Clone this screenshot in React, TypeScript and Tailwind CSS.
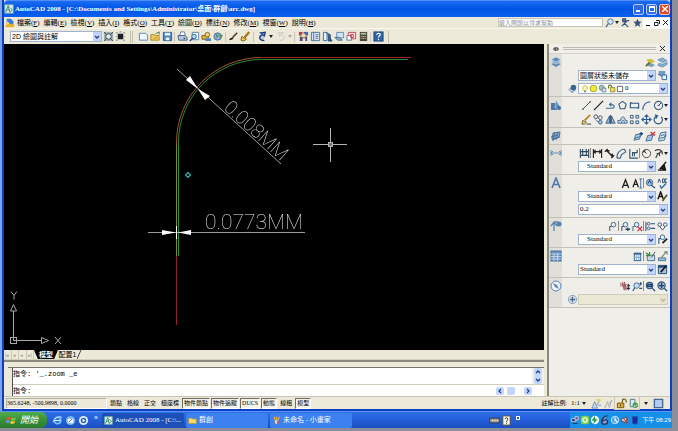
import type { ReactNode } from "react";
import clsx from "clsx";

type IconName = keyof typeof icons;

// All toolbar glyphs are drawn on a 12x12 grid
const icons = {
  app: (
    <>
      <rect x="1" y="1" width="10" height="10" fill="#dff0e8" stroke="#7fb5a5" />
      <path d="M2 10 5 2l2 8M3 7h4M7 4l3 3-3 3" stroke="#1f7a6c" fill="none" />
    </>
  ),
  doc: (
    <>
      <path d="M2 1h5l3 3v4H2z" fill="#3c7bd6" />
      <path d="M0 11 3 4l4 4 4-2v5z" fill="#f0b429" />
      <path d="M3 4l2 3-3 1z" fill="#fbe08a" />
    </>
  ),
  gear: (
    <>
      <rect x="1" y="1" width="10" height="10" fill="#9fb0b3" />
      <circle cx="6" cy="6" r="3" fill="#e3ecec" stroke="#33484d" />
      <path d="M1 1l3 3M11 1 8 4M1 11l3-3M11 11 8 8" stroke="#33484d" />
    </>
  ),
  save2: (
    <>
      <path d="M1 2h2M5 1h2M9 2h2M1 10h2M9 10h2M1 6h1M10 6h1" stroke="#6f7f88" />
      <rect x="3" y="3" width="6" height="6" fill="#1b1f23" />
    </>
  ),
  sheet: <path d="M1.500 2.500h7l2 2v5.500h-9z" fill="#eef6ff" stroke="#5b86ad" />,
  open: (
    <>
      <path d="M1 4h4l1 1h4v5H1z" fill="#f2cf6b" stroke="#a58028" />
      <path d="M6 3l4-2v3" stroke="#5a6d2e" fill="none" />
      <path d="M2 10 4 6h7l-2 4z" fill="#e0b64a" />
    </>
  ),
  disk: (
    <>
      <path d="M1.500 1.500h9v9h-9z" fill="#4d87c2" stroke="#2b5b90" />
      <path d="M3 2h6v3H3zM4 7h4v3H4z" fill="#eaf3fb" />
    </>
  ),
  print: (
    <>
      <path d="M4 1h4l1 4H3z" fill="#fff" stroke="#5f7fa0" />
      <path d="M1 5h8l2 2v3H2z" fill="#bccbdc" stroke="#3d5f86" />
      <circle cx="8" cy="8" r="1" fill="#2b4a75" />
    </>
  ),
  preview: (
    <>
      <path d="M3.500 1.500h7v8h-7z" fill="#f4f9ff" stroke="#5b86ad" />
      <circle cx="5.500" cy="6" r="2.500" fill="#b9d9f5" stroke="#2c5c92" />
      <path d="m4 8-3 3" stroke="#1e4370" strokeWidth="1.500" />
    </>
  ),
  publish: (
    <>
      <path d="M1 5h7v4H1z" fill="#e3b446" stroke="#76601d" />
      <circle cx="7" cy="4" r="2.500" fill="#f4d37d" stroke="#7d6521" />
      <path d="M4 8h7v3H5z" fill="#4f86bb" />
    </>
  ),
  globe: (
    <>
      <circle cx="5" cy="6" r="4" fill="#86aed4" stroke="#476f9b" />
      <path d="M3 3l3 2-2 3zM7 4h4L8 10z" fill="#5a8b5a" />
    </>
  ),
  brush: (
    <>
      <path d="m10 2-5 5" stroke="#463221" strokeWidth="1.600" />
      <path d="M1 10c1-2 2-3 4-3l1 1c-1 2-3 2-5 2z" fill="#2a1c12" />
    </>
  ),
  pen: (
    <>
      <path d="m10 1-5 6" stroke="#a7741d" strokeWidth="2.500" />
      <path d="m2 6 5 3-3 2-3-1z" fill="#efc84d" stroke="#7c5c13" />
    </>
  ),
  undo: <path d="M8 10.500C1 10 2 5 7 3.500M4 2l5-.5-1 4z" stroke="#1d3e8e" strokeWidth="1.500" fill="#1d3e8e" fillOpacity=".2" />,
  redo: <path d="M4 10.500C11 10 10 5 5 3.500M8 2l-5-.5 1 4z" stroke="#c5c9c9" fill="none" />,
  props: (
    <>
      <path d="M1 1h4v4H1z" fill="#b63d50" />
      <path d="M6 1h5v4H6z" fill="#4866a8" />
      <path d="M2 6h8v5H8V8H5v3H2z" fill="#564a74" />
      <path d="M4 3h4v4H4z" fill="#e8dfa5" />
    </>
  ),
  palette: (
    <>
      <path d="M1.500 1.500h9v9h-9z" fill="#d6e6f5" stroke="#48719c" />
      <path d="M4 1v10M6 4h3M6 6h3M6 8h3" stroke="#48719c" />
    </>
  ),
  book: (
    <>
      <path d="M1.500 1.500h4v9h-4z" fill="#e9f2fb" stroke="#3c6695" />
      <path d="M5 2l4 2v7M7 5l4 6H7z" fill="#4377aa" stroke="#254f80" />
    </>
  ),
  sheetset: (
    <>
      <path d="M3 1.500h7.500v6H3z" fill="#cfe2f3" stroke="#6089ae" />
      <path d="M1 7h5l3 3H4z" fill="#93b5d3" stroke="#44688c" />
    </>
  ),
  markup: (
    <>
      <path d="M2.500 1.500h8v7h-8z" fill="#fbdde2" stroke="#c24156" />
      <path d="M1 5h5v5H1z" fill="#fff" stroke="#5b6ea5" />
      <path d="M5 4h3v3H5z" stroke="#d03848" fill="none" />
    </>
  ),
  calc: (
    <>
      <rect x="2" y="1" width="8" height="10" fill="#4a4438" />
      <path d="M3 2h6v2H3z" fill="#a8c69b" />
      <path d="M3 6h1M5 6h2M8 6h1M3 8h1M5 8h2M8 8h1" stroke="#d8d1bf" />
    </>
  ),
  help: (
    <>
      <rect x="1" y="1" width="10" height="10" fill="#2f65a6" stroke="#1c4475" />
      <path d="M4 4c0-2 4-2 4 0 0 1-2 1-2 3M6 8.500V10" stroke="#fff" strokeWidth="1.300" fill="none" />
    </>
  ),
  search: (
    <>
      <circle cx="7" cy="5" r="3" fill="#d6e6f8" stroke="#51709a" />
      <path d="m5 7-3 4" stroke="#51709a" strokeWidth="1.500" />
    </>
  ),
  comm: <path d="M3 2h3v3H3zM7 4h3M5 7l4 4M2 10l6-6" stroke="#31507f" strokeWidth="1.300" fill="#6c86b0" />,
  star: <path d="M6 2l1.300 3 3.200.3-2.500 2.200.8 3.200L6 9l-2.800 1.700.8-3.200L1.500 5.300 4.700 5z" fill="#34517f" />,
  layers: (
    <>
      <path d="M1 8l5-2 5 2-5 3z" fill="#5f8cb8" />
      <path d="M1 6l5-3 5 3-5 2z" fill="#84a9cc" stroke="#dfe8f0" strokeWidth=".5" />
      <path d="M1 3.500 6 1l5 2.500L6 6z" fill="#5f8cb8" stroke="#dfe8f0" strokeWidth=".5" />
    </>
  ),
  layerMake: (
    <>
      <path d="M1 9l5-3 5 3-4 2z" fill="#76a0c6" />
      <path d="M1 3l6-1 4 3-5 2z" fill="#d2bf3f" />
      <path d="m1 10 4-4" stroke="#63712a" strokeWidth="2" />
    </>
  ),
  layerPrev: (
    <>
      <path d="M1 3l5-2 5 3-5 2zM2 7l4 1 5-2v2l-5 3-5-2z" fill="#8fb0cd" stroke="#6b91b5" />
    </>
  ),
  layerState: (
    <>
      <path d="M2 1h7v5H2z" fill="#6f9bc5" />
      <path d="M5.500 5.500h5v5h-5z" fill="#e9f2f9" stroke="#2d5f91" />
      <path d="M1 4l4 3" stroke="#2d5f91" />
    </>
  ),
  layerSphere: (
    <>
      <path d="M1 7l4-2 5 2-4 4z" fill="#6e93b6" />
      <circle cx="7" cy="5" r="3" fill="#40628b" />
      <path d="M2 7l5 2" stroke="#eef" />
    </>
  ),
  bulb: (
    <>
      <path d="M4 8C1 5 3 1 6 1s5 4 2 7z" fill="#fff9ad" stroke="#a69c35" />
      <path d="M4.500 9h3v2h-3z" fill="#78828c" />
    </>
  ),
  sun: <circle cx="6" cy="6" r="4.500" fill="#f1ec3c" stroke="#8f8c1f" />,
  vport: (
    <>
      <circle cx="5" cy="5" r="3.500" fill="#9fc1b8" stroke="#5e8386" />
      <path d="M5.500 5.500h5v5h-5z" fill="#dbe7ec" stroke="#56748a" />
    </>
  ),
  lock: (
    <>
      <path d="M2 6V3c0-2 4-2 4 0v2" stroke="#6c7420" strokeWidth="1.500" fill="none" />
      <path d="M4.500 4.500h6v6h-6z" fill="#e9df4b" stroke="#7f7a21" />
    </>
  ),
  swatch: <path d="M2 2h8v8H2z" fill="#fff" stroke="#222" />,
  shapes: (
    <>
      <path d="M1 4h6v7H1z" fill="#4d79a8" />
      <path d="M6 1l5 8H5z" fill="#6a92bd" stroke="#dde7ef" strokeWidth=".5" />
      <circle cx="9" cy="9" r="2" fill="#456f9d" />
    </>
  ),
  line: <path d="M2 10 10 2M1 10h2M9 2h2" stroke="#31404d" />,
  ray: <path d="M1 11 11 1M4 8l4-4" stroke="#1d2831" strokeWidth="1.300" />,
  pline: <path d="M1 9h6c4 0 4-4 0-4H5M7 3 5 5l2 2" stroke="#3d6c9d" strokeWidth="1.200" fill="none" />,
  polygon: <path d="M6 1.500l4 3-1.500 5h-5L2 4.500z" stroke="#31597f" strokeWidth="1.200" fill="none" />,
  rect: <path d="M1.500 3.500h9v5h-9zM1 3h2M9 9h2" stroke="#31597f" strokeWidth="1.200" fill="none" />,
  arc: <path d="M2 11C2 6 5 2 10 2" stroke="#3d6c9d" strokeWidth="1.300" fill="none" />,
  circle: (
    <>
      <circle cx="6" cy="6" r="4.500" fill="none" stroke="#3c6287" strokeWidth="1.200" />
      <path d="M6 6l3-3M5 6h2" stroke="#26445f" />
    </>
  ),
  erase: (
    <>
      <path d="m10 1-6 6" stroke="#b5872d" strokeWidth="2" />
      <path d="m2 7 4 2-2 2H1z" fill="#f2d46b" stroke="#705825" />
      <path d="M6 11h5" stroke="#333" />
    </>
  ),
  copy: (
    <>
      <circle cx="3" cy="3" r="2" fill="none" stroke="#3d4f63" />
      <circle cx="8" cy="4" r="2" fill="none" stroke="#3d4f63" />
      <circle cx="8" cy="9" r="2" fill="#a9c9e3" stroke="#2f5d8b" />
      <path d="M3 6l3 3" stroke="#2f5d8b" />
    </>
  ),
  mirror: <path d="M5 2v8H1zM7 2v8h4zM6 1v10" stroke="#34577c" fill="#9cbad4" />,
  offset: <path d="M1 10h10V7H9C9 2 4 2 4 7H1zM5 10c0-4 3-4 3 0" stroke="#3b668f" fill="#cadcea" />,
  array: <path d="M1.500 1.500h3v3h-3zM7.500 1.500h3v3h-3zM1.500 7.500h3v3h-3zM7.500 7.500h3v3h-3z" stroke="#3a5877" fill="#dce7f0" />,
  move: <path d="M6 1v10M1 6h10M4 3l2-2 2 2M4 9l2 2 2-2M3 4 1 6l2 2M9 4l2 2-2 2" stroke="#2b5a8c" strokeWidth="1.200" fill="none" />,
  rotate: <path d="M4 2a4.500 4.500 0 1 0 5 1M2 1l3 1-2 3" stroke="#39638f" strokeWidth="1.400" fill="none" />,
  plane: (
    <>
      <path d="M3 3l7-1-1 5-7 2z" fill="#8fb0d3" stroke="#49719f" />
      <path d="M1 7l7-2M2 10l8-3M5 2 3 11M8 2 6 10" stroke="#49719f" />
    </>
  ),
  planeAdd: (
    <>
      <path d="M3 4l6-1-2 6-6 1z" fill="#a9c5de" stroke="#426d97" />
      <path d="M2 8l6-2" stroke="#426d97" />
      <path d="M7 3h4M9 1v4" stroke="#1f4a7c" strokeWidth="1.500" fill="none" />
    </>
  ),
  planeDel: (
    <>
      <path d="M3 5l6-1-2 6-6 1z" fill="#a9c5de" stroke="#426d97" />
      <path d="m6 1 5 4M11 1 6 5" stroke="#cf3340" strokeWidth="1.500" />
    </>
  ),
  planeEdit: <path d="M4 2l6-1-2 6-6 1zM2 8v3l6-1 2-6M4 5l4-1" fill="#cddeeb" stroke="#426d97" />,
  dim: <path d="M1 3v6M11 3v6M1 6h10M3 4 1 6l2 2M9 4l2 2-2 2" stroke="#6a8fb6" fill="none" />,
  dimQuick: <path d="M1.500 1v10M10.500 1v10M4 1v7M8 1v7M1 4h10M1 8h10" stroke="#31475e" strokeWidth="1.200" />,
  dimLinear: <path d="M1.500 1v10M10.500 1v10M2 4h8M4 2 2 4l2 2M8 2l2 2-2 2" stroke="#222" strokeWidth="1.200" fill="none" />,
  dimAligned: <path d="M3 3l6 6M1 4l3-3M8 11l3-3M3 3h3M9 9V6" stroke="#222" strokeWidth="1.500" fill="none" />,
  dimArc: <path d="M1 11C1 5 4 2 9 1M5 11c0-3 2-5 5-6M9 1l2 4M1 11h4" stroke="#3a5d80" strokeWidth="1.200" fill="none" />,
  dimOrd: <path d="M2 1v10h9M5 9V5h5V2M5 5h2v4" stroke="#33526f" strokeWidth="1.200" fill="none" />,
  dimRadius: (
    <>
      <circle cx="6" cy="6" r="4.500" fill="none" stroke="#444" />
      <path d="m6 6-3-3M3 5V3h2" stroke="#222" fill="none" />
    </>
  ),
  dimDia: <path d="M2 3c5-3 9 0 8 4M6 6l4-3M6 6c-2 1-2 3-3 5M4 6h3v3" stroke="#3e3e3e" strokeWidth="1.200" fill="none" />,
  dimStyle: <path d="M1 10h9M3 9l7-8M5 8l3-3 1 4z" stroke="#111" strokeWidth="1.500" fill="#444" />,
  letter: <path d="M2 11 6 1l4 10M3.500 7.500h5" stroke="#4b79aa" strokeWidth="1.600" fill="none" />,
  text: <path d="M2.500 11 6 2l3.500 9M4 8h4" stroke="#1c1c1c" strokeWidth="1.400" fill="none" />,
  mtext: (
    <>
      <path d="M1 10 4 2l3 8M2 7h4" stroke="#1c1c1c" strokeWidth="1.300" fill="none" />
      <path d="M9.500 1v10M8 1h3M8 11h3" stroke="#3d6b9b" />
    </>
  ),
  find: (
    <>
      <circle cx="5" cy="5" r="3.500" fill="#a8c7e4" stroke="#3e6490" />
      <path d="m7 8 4 3M3 6l2-3 2 3" stroke="#2b4c73" strokeWidth="1.300" fill="none" />
    </>
  ),
  spell: (
    <>
      <path d="M1 5 2.500 1 4 5M6 1v4h2V1zM11 1H9v4h2" stroke="#2c4d74" fill="none" />
      <path d="m3 8 2 3 5-5" stroke="#3a71ad" strokeWidth="1.600" fill="none" />
    </>
  ),
  textStyle: (
    <>
      <path d="M1 9 4 1l3 8M2 6h4" stroke="#111" strokeWidth="1.500" fill="none" />
      <path d="m11 4-5 7" stroke="#5b5b2c" strokeWidth="2" />
    </>
  ),
  leader: (
    <>
      <path d="M1 6l3-4 3 4M4 2v9M4 2h4" stroke="#5d87b2" strokeWidth="1.300" fill="none" />
      <circle cx="9" cy="4" r="2.500" fill="#5b80aa" />
    </>
  ),
  mleader: (
    <>
      <circle cx="7" cy="4" r="2.500" fill="#e4eef6" stroke="#3a6187" />
      <path d="M5 6H3v5" stroke="#3a6187" strokeWidth="1.200" fill="none" />
    </>
  ),
  mleaderStyle: (
    <>
      <circle cx="6" cy="3.500" r="2.500" fill="#e4eef6" stroke="#3a6187" />
      <path d="M4 5H2v6" stroke="#3a6187" strokeWidth="1.200" fill="none" />
      <path d="m11 5-5 5" stroke="#222" strokeWidth="2" />
    </>
  ),
  mleaderAdd: (
    <>
      <circle cx="6" cy="4" r="2.500" fill="#e4eef6" stroke="#3a6187" />
      <path d="M4 6H2v5" stroke="#3a6187" strokeWidth="1.200" fill="none" />
      <path d="M6 9h5M8.500 7v4" stroke="#1d4678" strokeWidth="1.400" />
    </>
  ),
  mleaderDel: (
    <>
      <circle cx="5" cy="4" r="2.500" fill="#e4eef6" stroke="#3a6187" />
      <path d="M3 6H1v5" stroke="#3a6187" fill="none" />
      <path d="m6 6 5 5M11 6l-5 5" stroke="#cf3340" strokeWidth="1.400" />
    </>
  ),
  mleaderAlign: (
    <>
      <path d="M1 1v10M6 3h5M6 8h5" stroke="#33587f" strokeWidth="1.200" />
      <circle cx="4" cy="3" r="1.500" fill="none" stroke="#33587f" />
      <circle cx="4" cy="8" r="1.500" fill="none" stroke="#33587f" />
    </>
  ),
  mleaderJoin: (
    <>
      <circle cx="3" cy="4" r="2" fill="none" stroke="#33587f" />
      <circle cx="9" cy="4" r="2" fill="none" stroke="#33587f" />
      <path d="M3 6l3 4 3-4" stroke="#33587f" fill="none" />
    </>
  ),
  table: (
    <>
      <rect x="1" y="1" width="10" height="10" fill="#6c93c0" stroke="#44709f" />
      <path d="M1 4h10M1 6.500h10M1 9h10M4 4v7M7.500 4v7" stroke="#d4e1ee" strokeWidth=".8" />
    </>
  ),
  tableLight: (
    <>
      <rect x="2.500" y="2.500" width="7" height="8" fill="#edf4fb" stroke="#315f94" />
      <path d="M2 3h8" stroke="#315f94" strokeWidth="2" />
      <path d="M5 4v6M7.500 4v6M3 7h6" stroke="#85a6c9" />
    </>
  ),
  tableOut: (
    <>
      <path d="M2.500 4.500h8v6h-8z" fill="#cad9e8" stroke="#4b6f8d" />
      <path d="m1 2 4 3M5 1v4H1" stroke="#33903e" strokeWidth="1.400" fill="none" />
      <path d="m11 1-4 6" stroke="#4a4a36" />
    </>
  ),
  tableIn: (
    <>
      <path d="M1.500 7.500h8v3h-8z" fill="#9cbfdf" stroke="#4b6f8d" />
      <path d="m10 1-5 6M8 1h3v3" stroke="#7d8173" strokeWidth="1.200" fill="none" />
    </>
  ),
  tableStyle: (
    <>
      <path d="M1.500 1.500h9v9h-9z" fill="#a5bdd6" stroke="#1f4a7c" />
      <path d="M1 3h10" stroke="#1f4a7c" strokeWidth="2" />
      <path d="m10 2-6 7" stroke="#111" strokeWidth="1.800" />
    </>
  ),
  compass: (
    <>
      <circle cx="6" cy="6" r="5" fill="#eef3f7" stroke="#5c84ae" />
      <path d="m3 3 4 2 2 4-4-2z" fill="#5c84ae" />
    </>
  ),
  pan: (
    <>
      <path d="M2 3h5v7H4z" fill="#b66f6c" />
      <path d="M1 2v4M3 1v5M5 1v5" stroke="#944e52" />
      <path d="M9 3v7M7 8h4M8 5h3" stroke="#233c5e" strokeWidth="1.300" />
    </>
  ),
  zoomRt: (
    <>
      <circle cx="5" cy="5" r="3" fill="#c9dcee" stroke="#426b97" />
      <path d="m3 7-2 4M8 3h3M9.500 1v4M8 8h3" stroke="#2b4f77" strokeWidth="1.200" />
    </>
  ),
  zoomWin: (
    <>
      <circle cx="5" cy="5" r="3.500" fill="#89a9c8" stroke="#2e527c" strokeWidth="1.200" />
      <path d="m8 8 3 3M3 4h4v2H3z" stroke="#1e3d64" strokeWidth="1.300" fill="none" />
    </>
  ),
  zoomExt: (
    <>
      <circle cx="5" cy="5" r="4" fill="#a6bed6" stroke="#33557b" strokeWidth="1.200" />
      <path d="M5 2v6M2 5h6M8 8l3 3" stroke="#1e3d64" strokeWidth="1.400" />
    </>
  ),
  target: (
    <>
      <circle cx="6" cy="6" r="4.500" fill="#dde6ee" stroke="#8299b0" />
      <path d="M6 3v6M3 6h6" stroke="#4a6a8e" strokeWidth="1.500" />
    </>
  ),
  annoVis: (
    <>
      <path d="M1 11 4 4l3 7z" fill="#c9dcee" stroke="#6d90b4" />
      <path d="m6 8 4-6M8 8h3" stroke="#6d90b4" />
      <path d="M6 1h4v3H7z" fill="#e5cf62" />
    </>
  ),
  annoAuto: <path d="M2 11l3-7 2 7M8 9V4h2M7 6l3-4" stroke="#a4a9aa" fill="none" />,
  unlock: (
    <>
      <path d="M7 5V3c0-3 4-2 4 0v2" stroke="#6b5310" strokeWidth="1.300" fill="none" />
      <path d="M1.500 5.500h7v5h-7z" fill="#e0b43a" stroke="#6b5310" />
      <path d="M5 7v2" stroke="#3b2c00" />
    </>
  ),
  tray: (
    <>
      <path d="M2.500 1.500h5v8h-5z" fill="#dce8f2" stroke="#4f7391" />
      <circle cx="8" cy="8" r="3" fill="#3f9c4a" />
      <path d="m6.500 8 1 1.500L10 7" stroke="#fff" fill="none" />
    </>
  ),
  clean: <path d="M1.500 1.500h9v9h-9z" fill="#b4cdee" stroke="#44699c" strokeWidth="1.500" />,
  ie: (
    <>
      <circle cx="6" cy="6" r="3.500" fill="none" stroke="#7cc8ff" strokeWidth="1.800" />
      <path d="M3 6h6" stroke="#d9f1ff" strokeWidth="1.300" />
      <path d="M1 8C3 3 8 0 11 3" stroke="#bfe3ff" fill="none" />
    </>
  ),
  desktop: (
    <>
      <circle cx="6" cy="6" r="5" fill="#71b8e8" />
      <path d="M3 4h6v5H3z" fill="#f5f9ff" />
      <path d="m4 8 4-4" stroke="#3d6fa0" />
    </>
  ),
  media: (
    <>
      <circle cx="6" cy="6" r="5" fill="#e6eefc" />
      <circle cx="6" cy="6" r="3" fill="#2366ba" />
      <path d="M5 4l3 2-3 2z" fill="#fff" />
    </>
  ),
  folder: <path d="M1 3h4l1 1h5v6H1z" fill="#f8dc6a" stroke="#c59b2c" />,
  paint: (
    <>
      <path d="M3 5h6l-1 6H4z" fill="#d6dbe6" stroke="#6d7690" />
      <path d="M4 5 3 1M6 5V1M8 5l2-4" stroke="#e9b04d" strokeWidth="1.500" />
      <path d="M7 6l3 2-3 3z" fill="#cb4a37" />
    </>
  ),
  keyboard: (
    <>
      <path d="M1 3.500h10v5H1z" fill="#d5d2c7" stroke="#2b2b2b" />
      <path d="M2 5h8M2 7h8" stroke="#555" strokeDasharray="1 1" />
    </>
  ),
  question: (
    <>
      <path d="M2 1h8v10H2z" fill="#fffdf0" stroke="#4d4a36" />
      <path d="M4.500 4.500c0-2 3-2 3 0C7.500 6 6 6 6 7.500M6 8.500v1" stroke="#222" fill="none" />
    </>
  ),
  net: (
    <>
      <path d="M2 4h5v4H2z" fill="#303d77" stroke="#c6cbe8" />
      <path d="M6 2h4v4H6z" fill="#6b5a86" stroke="#d9d9ee" />
      <path d="M3 10h6" stroke="#222" />
    </>
  ),
  leaf: (
    <>
      <rect x="1" y="1" width="10" height="10" rx="3" fill="#83cf4c" />
      <circle cx="6" cy="6" r="2.500" fill="none" stroke="#f2ffe4" strokeWidth="1.500" />
    </>
  ),
  bolt: (
    <>
      <circle cx="6" cy="6" r="5" fill="#e9f8ee" />
      <path d="M6 1 2 7h3l-1 4 5-6H6z" fill="#1f9a4a" />
    </>
  ),
  six: <path d="M9 1C5 1 2 5 2 8c0 4 7 4 7 0 0-3-5-3-6 0" stroke="#23315e" strokeWidth="1.600" fill="#8da4cc" />,
  quick: (
    <>
      <circle cx="6" cy="6" r="4.500" fill="#4ea5ea" stroke="#d4edff" />
      <path d="M6 3v3l3 3" stroke="#fff" strokeWidth="1.400" fill="none" />
    </>
  ),
  mute: (
    <>
      <path d="M2 4h3l3-2v8L5 8H2z" fill="#d6c6c9" stroke="#5b4854" />
      <path d="m4 4 6 6M10 4l-6 6" stroke="#b9403c" strokeWidth="1.200" />
    </>
  ),
  shield: <path d="M3 2h6v8l-3 1-3-1z" fill="#1a2e95" stroke="#2f49b5" />,
  windows: (
    <>
      <path d="M1 3c2-1 3-1 5 0L5 6c-2-1-3-1-5 0z" fill="#e5532b" />
      <path d="M7 3c2 1 3 1 5 0l-1 3c-2 1-3 1-5 0z" fill="#7ec242" />
      <path d="M0 7c2-1 3-1 5 0l-1 3c-2-1-3-1-5 0z" fill="#5a9be6" />
      <path d="M6 7c2 1 3 1 5 0l-1 3c-2 1-3 1-5 0z" fill="#f6c935" />
    </>
  ),
} satisfies Record<string, ReactNode>;

function Icon({ name, className = "size-[11px]" }: { name: IconName; className?: string }) {
  return (
    <svg viewBox="0 0 12 12" className={clsx("block shrink-0", className)} fill="none" aria-hidden="true">
      {icons[name]}
    </svg>
  );
}

function ToolButton({ name }: { name: IconName }) {
  return (
    <button type="button" aria-label={name} className="flex size-3 shrink-0 items-center justify-center">
      <Icon name={name} />
    </button>
  );
}

const Sep = () => <span className="h-2.5 w-px shrink-0 bg-[#8d8b80]" />;

function Caret() {
  return (
    <svg viewBox="0 0 4 3" className="h-[3px] w-1 shrink-0" aria-hidden="true">
      <path d="M0 0h4L2 3z" fill="#222" />
    </svg>
  );
}

function Chevron({ dir = "down", color = "#27427a" }: { dir?: "down" | "up" | "left" | "right"; color?: string }) {
  const d = { down: "M1 2l2 2 2-2", up: "M1 4l2-2 2 2", left: "M4 1 2 3l2 2", right: "M2 1l2 2-2 2" }[dir];
  return (
    <svg viewBox="0 0 6 6" className="size-1.5" aria-hidden="true">
      <path d={d} fill="none" stroke={color} strokeWidth="1.3" />
    </svg>
  );
}

interface ComboProps {
  label: string;
  value: string;
  serif?: boolean;
  indent?: boolean;
  disabled?: boolean;
}

function Combo({ label, value, serif, indent, disabled }: ComboProps) {
  return (
    <div
      className={clsx(
        "relative flex h-[11px] min-w-0 flex-1 border",
        disabled ? "border-[#d0ccb8] bg-[#ebe8d6]" : "border-[#9fb3cf] bg-white",
      )}
    >
      <select
        aria-label={label}
        disabled={disabled}
        className={clsx(
          "h-full w-full appearance-none bg-transparent text-[7px] leading-[9px] text-black outline-none",
          serif && "font-['Liberation_Serif','Noto_Sans_CJK_TC',serif]",
          indent ? "pl-2" : "pl-px",
        )}
      >
        <option>{value}</option>
      </select>
      <span
        className={clsx(
          "pointer-events-none absolute inset-y-0 right-0 flex w-2 items-center justify-center",
          disabled ? "bg-[#e6e3d0]" : "bg-[#c3d5fa]",
        )}
      >
        <Chevron color={disabled ? "#b9b59f" : "#27427a"} />
      </span>
    </div>
  );
}

const menus = [
  ["檔案", "F"],
  ["編輯", "E"],
  ["檢視", "V"],
  ["插入", "I"],
  ["格式", "O"],
  ["工具", "T"],
  ["繪圖", "D"],
  ["標註", "N"],
  ["修改", "M"],
  ["視窗", "W"],
  ["說明", "H"],
];

function TitleBar() {
  return (
    <header className="flex h-[17px] shrink-0 items-center gap-px rounded-t-sm border-t border-[#4f8cf5] bg-linear-to-b from-[#1b6cf3] via-[#0054e3] to-[#0a5ff0]">
      <Icon name="app" className="size-2.5" />
      <h1 className="flex-1 truncate font-['Liberation_Serif','Noto_Sans_CJK_TC',serif] text-[7px] leading-3 font-bold text-white">
        AutoCAD 2008 - [C:\Documents and Settings\Administrator\桌面\群創\arc.dwg]
      </h1>
      <div className="flex gap-0.5">
        <button type="button" aria-label="Minimize" className="flex size-[11px] items-end rounded-xs border border-[#b9cdf7] bg-[#2f6ae4] p-0.5">
          <span className="h-0.5 w-1 bg-white" />
        </button>
        <button type="button" aria-label="Restore" className="flex size-[11px] items-center justify-center rounded-xs border border-[#b9cdf7] bg-[#2f6ae4]">
          <span className="size-1.5 border border-t-2 border-white" />
        </button>
        <button type="button" aria-label="Close" className="flex size-[11px] items-center justify-center rounded-xs border border-[#f3c0b0] bg-[#dd4a26]">
          <svg viewBox="0 0 6 6" className="size-1.5">
            <path d="m0 0 6 6M6 0 0 6" stroke="#fff" strokeWidth="1.4" />
          </svg>
        </button>
      </div>
    </header>
  );
}

function MenuBar() {
  return (
    <nav className="flex h-[11px] shrink-0 items-center pl-px">
      <Icon name="doc" className="size-2.5" />
      <div className="ml-0.5 flex flex-1 gap-1">
        {menus.map(([label, key]) => (
          <button
            key={key}
            type="button"
            className="font-['Liberation_Serif','Noto_Sans_CJK_TC',serif] text-[7px] leading-[10px] whitespace-nowrap text-black"
          >
            {label}(<u>{key}</u>)
          </button>
        ))}
      </div>
      <input
        aria-label="鍵入問題以尋求幫助"
        placeholder="鍵入問題以尋求幫助"
        className="h-[9px] w-[105px] border border-[#c9c6b8] bg-white text-[6px] leading-[8px] outline-none placeholder:text-[#8f8f8f]"
      />
      <div className="flex items-center">
        <ToolButton name="search" />
        <Caret />
        <ToolButton name="comm" />
        <ToolButton name="star" />
      </div>
      <div className="flex items-center bg-white">
        <button type="button" aria-label="Minimize drawing" className="flex h-2.5 w-[9px] items-end justify-center pb-0.5">
          <span className="h-px w-1 bg-black" />
        </button>
        <button type="button" aria-label="Restore drawing" className="flex h-2.5 w-[9px] items-center justify-center">
          <svg viewBox="0 0 6 6" className="size-1.5">
            <path d="M2 .5h3.500V4M.5 2.500H4v3H.5z" stroke="#222" fill="none" />
          </svg>
        </button>
        <button type="button" aria-label="Close drawing" className="flex h-2.5 w-[9px] items-center justify-center">
          <svg viewBox="0 0 6 6" className="size-[5px]">
            <path d="m0 0 6 6M6 0 0 6" stroke="#222" strokeWidth="1.2" />
          </svg>
        </button>
      </div>
    </nav>
  );
}

function Toolbar() {
  return (
    <div className="flex h-4 shrink-0 items-center border-t border-[#f8f7f0]">
      <div className="flex items-center pl-1.5">
        <div className="flex w-[92px]">
          <Combo label="工作區" value="2D 繪圖與註解" />
        </div>
        <ToolButton name="gear" />
        <ToolButton name="save2" />
      </div>
      <span className="mx-1 h-3 w-[3px] shrink-0 border-x border-[#c2bfb1]" />
      <div className="flex items-center border-r border-[#c2bfb1] pr-1">
        <ToolButton name="sheet" />
        <ToolButton name="open" />
        <ToolButton name="disk" />
        <span className="mx-px h-2.5 w-px bg-[#c9c6b8]" />
        <ToolButton name="print" />
        <ToolButton name="preview" />
        <ToolButton name="publish" />
        <ToolButton name="globe" />
        <span className="mx-px h-2.5 w-px bg-[#c9c6b8]" />
        <ToolButton name="brush" />
        <ToolButton name="pen" />
        <span className="mx-0.5 h-2.5 w-px bg-[#c9c6b8]" />
        <ToolButton name="undo" />
        <span className="mr-0.5 ml-px flex">
          <Caret />
        </span>
        <ToolButton name="redo" />
        <span className="ml-px flex opacity-30">
          <Caret />
        </span>
        <span className="mx-0.5 h-2.5 w-px bg-[#c9c6b8]" />
        <ToolButton name="props" />
        <ToolButton name="palette" />
        <ToolButton name="book" />
        <ToolButton name="sheetset" />
        <ToolButton name="markup" />
        <ToolButton name="calc" />
        <span className="mx-px h-2.5 w-px bg-[#c9c6b8]" />
        <ToolButton name="help" />
      </div>
    </div>
  );
}

function Drawing() {
  return (
    <div className="min-h-0 flex-1 overflow-hidden bg-black">
      <svg
        viewBox="4 44 540 306"
        preserveAspectRatio="xMinYMin meet"
        className="block h-full w-full font-['Roboto','Inter',sans-serif] font-thin will-change-transform"
        fill="none"
      >
        {/* part outline: outer and inner edge */}
        <path d="M176.500 256V142A85 85 0 0 1 261.500 57.500" stroke="#a8542f" />
        <path d="M176.500 256V145" stroke="#7d8a33" />
        <path d="M261 57.500H411" stroke="#a62626" />
        <path d="M176.500 256V325" stroke="#8f2230" />
        <path d="M178.500 256V142A83 83 0 0 1 261.500 59.500H408" stroke="#2c8a36" />

        {/* 0.008MM dimension */}
        <path d="M177 69 281 164" stroke="#9a9a9a" />
        <path d="M198 89 186 80l4-4zM198 89l7 11 5-4z" fill="#fff" />
        <text x="0" y="0" transform="translate(223 109) rotate(42)" fontSize="19" fill="#e0e0e0">
          0.008MM
        </text>

        {/* 0.0773MM dimension */}
        <path d="M148 232.500H305" stroke="#9a9a9a" />
        <path d="M176 232.500 162 230v5zM178 232.500 191 230v5z" fill="#fff" />
        <path d="M176.500 226v13" stroke="#fff" />
        <text x="205" y="229" fontSize="21" fill="#e0e0e0">
          0.0773MM
        </text>

        {/* crosshair and grip */}
        <path d="M313 144.500h34M330.500 128v34" stroke="#b5b5b5" />
        <rect x="328.500" y="142.500" width="4" height="4" fill="#777" stroke="#b5b5b5" />
        <path d="M188 172.500l2.500 2.500-2.500 2.500-2.500-2.500z" stroke="#2fb5b5" strokeWidth="1.200" />

        {/* UCS icon */}
        <g stroke="#a8a8a8">
          <rect x="10.500" y="337.500" width="6" height="6" />
          <path d="M13.500 340V311M13.500 304.500l-3 6.500h6zM13 340.500h28M48.500 340.500 41.500 337.500v6z" />
          <path d="M11 291.500l3 4 3-4M14 295.500v4M55 337l6 7M61 337l-6 7" />
        </g>
      </svg>
    </div>
  );
}

function LayoutTabs() {
  return (
    <div className="flex h-[10px] shrink-0 items-center border-b border-[#d3d0c2] bg-[#ece9d8]">
      <div className="flex w-[30px]">
        {["|◂", "◂", "▸", "▸|"].map((t) => (
          <button key={t} type="button" className="flex h-[9px] flex-1 items-center justify-center border-r border-[#cbc8ba] text-[5px] leading-[8px] text-[#9b998e]">
            {t}
          </button>
        ))}
      </div>
      <button
        type="button"
        className="h-[9px] w-6 bg-black text-center text-[7px] leading-[9px] font-bold text-white [clip-path:polygon(0_0,100%_0,84%_100%,16%_100%)]"
      >
        模型
      </button>
      <button type="button" className="h-[9px] w-[19px] text-center text-[7px] leading-[9px] whitespace-nowrap text-black">
        配置1
      </button>
      <svg viewBox="0 0 5 9" className="h-[9px] w-[5px]" aria-hidden="true">
        <path d="M0 9 4 0" stroke="#444" />
      </svg>
    </div>
  );
}

function ScrollButton({ dir }: { dir: "up" | "down" | "left" | "right" }) {
  return (
    <button type="button" aria-label={dir} className="flex size-2 shrink-0 items-center justify-center rounded-xs bg-[#c3d5fa]">
      <Chevron dir={dir} />
    </button>
  );
}

function CommandWindow() {
  return (
    <section className="shrink-0 border-t-2 border-[#8b897d] bg-[#ece9d8] pt-[5px] font-['Liberation_Mono','Noto_Sans_CJK_TC',monospace] text-[7px] text-black">
      <div className="ml-1 flex border-t border-t-[#77756a] bg-[#ece9d8] pl-1">
        <div className="min-w-0 flex-1 border-l border-[#55534a] bg-white">
          <div className="flex h-[17px] justify-between border-b border-[#cfccbd]">
            <p className="pt-px leading-[11px] whitespace-pre">指令: '_.zoom _e</p>
            <div className="flex w-3 flex-col items-center justify-between bg-[#f1f0e8]">
              <ScrollButton dir="up" />
              <ScrollButton dir="down" />
            </div>
          </div>
          <div className="flex h-[11px] items-center">
            <label htmlFor="command" className="leading-[10px]">
              指令:
            </label>
            <input id="command" className="h-[9px] min-w-0 flex-1 bg-transparent px-1 outline-none" />
            <div className="mr-3 flex w-9 items-center justify-between">
              <ScrollButton dir="left" />
              <span className="mr-1.5 size-2 rounded-xs bg-[#c3d5fa]" />
              <ScrollButton dir="right" />
            </div>
          </div>
        </div>
      </div>
    </section>
  );
}

function Section({ icon, children }: { icon: IconName; children: ReactNode }) {
  return (
    <section className="flex border-b border-[#c4c2b8]">
      <div className="w-[13px] shrink-0 bg-[#e0dfd9] pt-0.5">
        <Icon name={icon} className="mx-auto size-3" />
      </div>
      <div className="flex min-w-0 flex-1 flex-col gap-0.5 py-0.5 pr-0.5">{children}</div>
    </section>
  );
}

function Row({ children }: { children: ReactNode }) {
  return <div className="flex h-3 items-center justify-end">{children}</div>;
}

function ComboRow({ icon, children }: { icon?: IconName; children: ReactNode }) {
  return (
    <div className="flex h-[11px] items-center pl-4">
      {children}
      {icon && <ToolButton name={icon} />}
    </div>
  );
}

function Dashboard() {
  return (
    <aside className="w-[123px] shrink-0 border-l-2 border-[#8b897d] bg-[#efeee9]">
      <div className="flex h-[10px] items-center gap-1 border-b border-[#d3d1c8] px-1">
        <svg viewBox="0 0 6 6" className="size-1.5" aria-hidden="true">
          <path d="M0 3h2M2 1v4M2 2h3v2H2" stroke="#333" fill="none" />
        </svg>
        <span className="h-[3px] flex-1 border-y border-[#bdbbb0]" />
        <button type="button" aria-label="Close dashboard" className="flex size-[6px] items-center">
          <svg viewBox="0 0 6 6" className="size-[5px]">
            <path d="m0 0 6 6M6 0 0 6" stroke="#222" strokeWidth="1.2" />
          </svg>
        </button>
      </div>

      <Section icon="layers">
        <Row>
          <ToolButton name="layerMake" />
          <ToolButton name="layerPrev" />
        </Row>
        <ComboRow icon="layerState">
          <Combo label="圖層狀態" value="圖層狀態未儲存" />
        </ComboRow>
        <div className="flex h-[11px] items-center pl-1">
          <ToolButton name="layerSphere" />
          <div className="flex h-[11px] flex-1 items-center border border-[#9fb3cf] bg-white pl-0.5">
            <Icon name="bulb" className="size-2" />
            <Icon name="sun" className="size-[9px]" />
            <Icon name="vport" className="size-[9px]" />
            <Icon name="lock" className="size-[9px]" />
            <Icon name="swatch" className="size-2" />
            <span className="ml-px flex-1 font-['Liberation_Serif',serif] text-[7px] leading-[9px] text-black">0</span>
            <button type="button" aria-label="圖層" className="flex h-[9px] w-2 items-center justify-center bg-[#c3d5fa]">
              <Chevron />
            </button>
          </div>
        </div>
      </Section>

      <Section icon="shapes">
        <Row>
          <ToolButton name="line" />
          <ToolButton name="ray" />
          <ToolButton name="pline" />
          <ToolButton name="polygon" />
          <ToolButton name="rect" />
          <ToolButton name="arc" />
          <ToolButton name="circle" />
          <Caret />
        </Row>
        <Row>
          <ToolButton name="erase" />
          <ToolButton name="copy" />
          <ToolButton name="mirror" />
          <ToolButton name="offset" />
          <ToolButton name="array" />
          <ToolButton name="move" />
          <ToolButton name="rotate" />
          <Caret />
        </Row>
      </Section>

      <Section icon="plane">
        <Row>
          <ToolButton name="planeAdd" />
          <ToolButton name="planeDel" />
          <ToolButton name="planeEdit" />
        </Row>
      </Section>

      <Section icon="dim">
        <Row>
          <ToolButton name="dimQuick" />
          <Sep />
          <ToolButton name="dimLinear" />
          <ToolButton name="dimAligned" />
          <ToolButton name="dimArc" />
          <ToolButton name="dimOrd" />
          <Sep />
          <ToolButton name="dimRadius" />
          <ToolButton name="dimDia" />
          <Caret />
        </Row>
        <ComboRow icon="dimStyle">
          <Combo label="標註型式" value="Standard" serif indent />
        </ComboRow>
      </Section>

      <Section icon="letter">
        <Row>
          <ToolButton name="text" />
          <ToolButton name="mtext" />
          <Sep />
          <ToolButton name="find" />
          <ToolButton name="spell" />
        </Row>
        <ComboRow icon="textStyle">
          <Combo label="文字型式" value="Standard" serif indent />
        </ComboRow>
        <ComboRow>
          <Combo label="文字高度" value="0.2" serif />
        </ComboRow>
      </Section>

      <Section icon="leader">
        <Row>
          <ToolButton name="mleader" />
          <Sep />
          <ToolButton name="mleaderAdd" />
          <ToolButton name="mleaderDel" />
          <Sep />
          <ToolButton name="mleaderAlign" />
          <ToolButton name="mleaderJoin" />
        </Row>
        <ComboRow icon="mleaderStyle">
          <Combo label="引線型式" value="Standard" serif indent />
        </ComboRow>
      </Section>

      <Section icon="table">
        <Row>
          <ToolButton name="tableLight" />
          <Sep />
          <ToolButton name="tableOut" />
          <ToolButton name="tableIn" />
        </Row>
        <ComboRow icon="tableStyle">
          <Combo label="表格型式" value="Standard" serif />
        </ComboRow>
      </Section>

      <Section icon="compass">
        <Row>
          <ToolButton name="pan" />
          <ToolButton name="zoomRt" />
          <Sep />
          <ToolButton name="zoomWin" />
          <ToolButton name="zoomExt" />
        </Row>
        <div className="flex h-[11px] items-center pl-1">
          <ToolButton name="target" />
          <Combo label="視圖" value="" disabled />
        </div>
      </Section>
    </aside>
  );
}

const modes = [
  { label: "鎖點", on: false },
  { label: "格線", on: false },
  { label: "正交", on: false },
  { label: "極座標", on: false },
  { label: "物件鎖點", on: true },
  { label: "物件追蹤", on: true },
  { label: "DUCS", on: true },
  { label: "動態", on: true },
  { label: "線粗", on: false },
  { label: "模型", on: true },
];

function StatusBar() {
  return (
    <footer className="flex h-[13px] shrink-0 items-center border-t border-[#c9c6b8] bg-[#ece9d8] px-0.5 text-[6px] leading-[9px] text-black">
      <output className="w-[101px] shrink-0 border border-t-[#b5b2a4] border-r-white border-b-white border-l-[#b5b2a4] font-['Liberation_Serif',serif] whitespace-nowrap">
        365.6248, -500.9898, 0.0000
      </output>
      <div className="ml-px flex flex-1 gap-px">
        {modes.map(({ label, on }) => (
          <button
            key={label}
            type="button"
            aria-pressed={on}
            className={clsx(
              "h-[11px] border px-px whitespace-nowrap",
              on ? "border-t-[#6f6d62] border-r-white border-b-white border-l-[#6f6d62] bg-[#f4f3ea]" : "border-transparent",
              label === "DUCS" && "font-['Liberation_Serif',serif]",
            )}
          >
            {label}
          </button>
        ))}
      </div>
      <span className="whitespace-nowrap">註解比例:</span>
      <button type="button" className="mr-1 ml-1 flex items-center gap-0.5 font-['Liberation_Serif',serif] text-[7px]">
        1:1 <Caret />
      </button>
      <ToolButton name="annoVis" />
      <ToolButton name="annoAuto" />
      <span className="flex border border-[#c9c6b8]">
        <ToolButton name="unlock" />
        <ToolButton name="tray" />
      </span>
      <span className="mx-1 flex">
        <Caret />
      </span>
      <ToolButton name="clean" />
      <span className="w-1" />
    </footer>
  );
}

function Task({ icon, label, active }: { icon: IconName; label: string; active?: boolean }) {
  return (
    <button
      type="button"
      className={clsx(
        "flex h-[15px] w-[82px] items-center gap-0.5 rounded-xs px-0.5 text-left text-white",
        active ? "bg-[#1c50b8]" : "bg-[#3c81f0]",
      )}
    >
      <Icon name={icon} className="size-[9px]" />
      <span className="truncate font-['Liberation_Serif','Noto_Sans_CJK_TC',serif] text-[7px] leading-[10px]">{label}</span>
    </button>
  );
}

function Taskbar() {
  return (
    <div className="flex h-[17px] shrink-0 items-center border-t border-[#5a93f5] bg-linear-to-b from-[#2f6fe8] via-[#245edb] to-[#1c4fc0]">
      <button
        type="button"
        className="flex h-full w-[47px] items-center gap-1 rounded-r-md bg-linear-to-b from-[#4fae4c] via-[#399038] to-[#2d7a2c] pl-1.5 text-[9px] leading-3 text-white italic"
      >
        <Icon name="windows" className="size-2.5" />
        開始
      </button>
      <div className="ml-1 flex items-center gap-px">
        <ToolButton name="ie" />
        <ToolButton name="desktop" />
        <ToolButton name="media" />
        <span className="mb-1 ml-1 text-[7px] leading-2 text-white">»</span>
      </div>
      <div className="ml-1 flex flex-1 gap-0.5">
        <Task icon="app" label="AutoCAD 2008 - [C:\..." active />
        <Task icon="folder" label="群創" />
        <Task icon="paint" label="未命名 - 小畫家" />
      </div>
      <div className="mr-[50px] flex items-center">
        <ToolButton name="keyboard" />
        <ToolButton name="question" />
        <span className="mb-1 ml-1 size-1 border border-white" />
      </div>
      <div className="flex h-full items-center bg-[#168fe6] pr-px">
        <div className="flex">
          {(["net", "leaf", "bolt", "six", "quick", "mute", "shield"] as const).map((n) => (
            <Icon key={n} name={n} className="size-2.5" />
          ))}
        </div>
        <time className="ml-0.5 text-[6px] leading-[10px] whitespace-nowrap text-white">下午 08:29</time>
      </div>
    </div>
  );
}

export default function App() {
  return (
    <div className="flex h-screen flex-col bg-[#8d8f98] pr-1.5 pb-[3px] font-['Liberation_Sans','Noto_Sans_CJK_TC',sans-serif]">
      <div className="flex min-h-0 flex-1 flex-col bg-[#7fa3e8] pl-0.5">
        <div className="flex min-h-0 flex-1 flex-col border-x-2 border-b-2 border-[#0b3fc4] bg-[#ece9d8]">
          <TitleBar />
          <MenuBar />
          <Toolbar />
          <div className="flex min-h-0 flex-1">
            <div className="flex min-w-0 flex-1 flex-col pr-[3px]">
              <Drawing />
              <LayoutTabs />
              <CommandWindow />
            </div>
            <Dashboard />
          </div>
          <StatusBar />
        </div>
      </div>
      <Taskbar />
    </div>
  );
}
